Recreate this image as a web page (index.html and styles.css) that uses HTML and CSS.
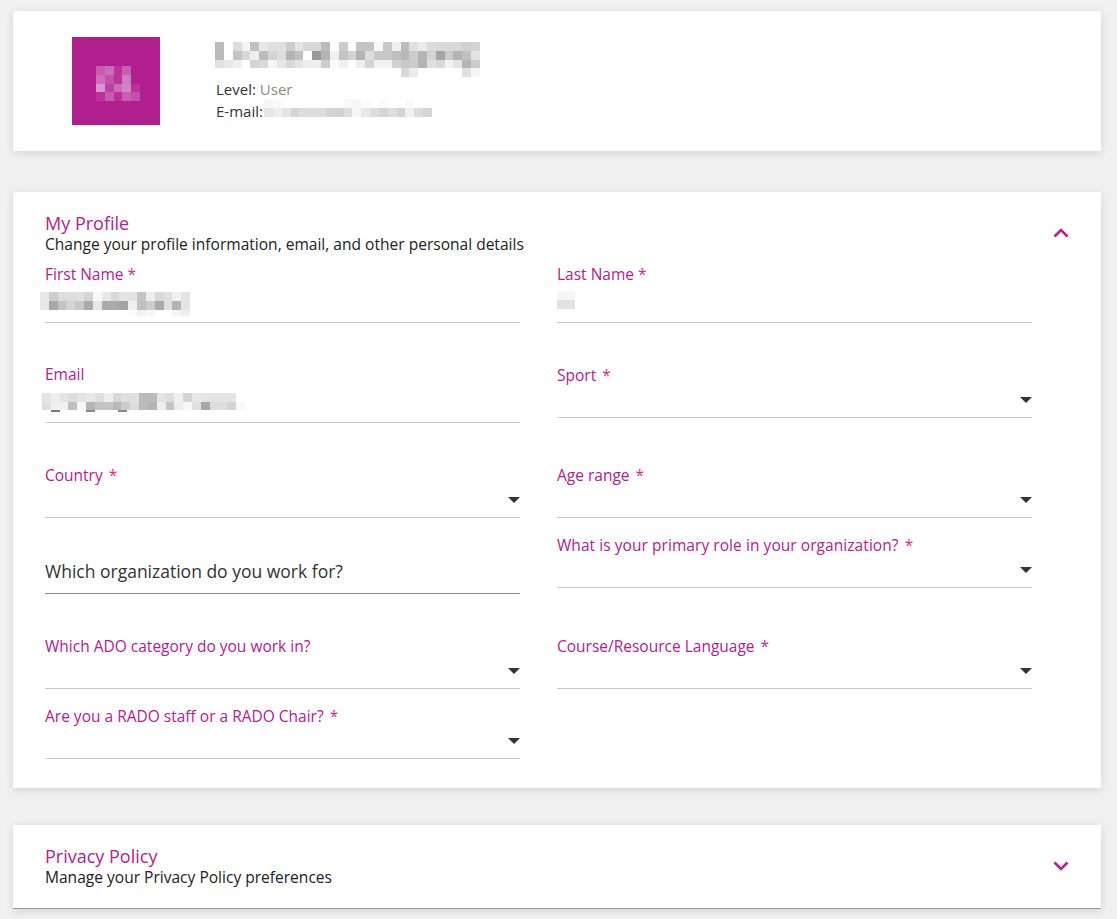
FILE: index.html
```html
<!DOCTYPE html>
<html lang="en">
<head>
<meta charset="utf-8">
<title>My Profile</title>
<link rel="stylesheet" href="styles.css">
</head>
<body>
<section class="card summary">
  <div class="avatar">
    <svg class="mosaic avatar-mosaic" viewBox="0 0 5 4" preserveAspectRatio="none" aria-hidden="true">
      <rect x="0" y="0" fill="#c55cb0"/><rect x="1" y="0" fill="#cc6db7"/><rect x="2" y="0" fill="#b9339b"/><rect x="3" y="0" fill="#c55fb0"/>
      <rect x="0" y="1" fill="#cc6db7"/><rect x="1" y="1" fill="#c451a9"/><rect x="2" y="1" fill="#b9339b"/><rect x="3" y="1" fill="#d07ec0"/>
      <rect x="0" y="2" fill="#da96cd"/><rect x="1" y="2" fill="#c03fa2"/><rect x="2" y="2" fill="#cc6cb7"/><rect x="3" y="2" fill="#d484c3"/><rect x="4" y="2" fill="#bd2f99"/>
      <rect x="0" y="3" fill="#bd2f99"/><rect x="1" y="3" fill="#c75bb0"/><rect x="2" y="3" fill="#bb2e99"/><rect x="3" y="3" fill="#c95eb1"/><rect x="4" y="3" fill="#c350a8"/>
    </svg>
  </div>
  <div class="identity">
    <svg class="mosaic name-mosaic" viewBox="0 0 30 4" preserveAspectRatio="none" aria-hidden="true">
      <rect x="0" y="0" fill="#bbb"/><rect x="2" y="0" fill="#ddd"/><rect x="3" y="0" fill="#f4f4f4"/><rect x="4" y="0" fill="#c0c0c0"/><rect x="5" y="0" fill="#e8e8e8"/><rect x="6" y="0" fill="#e0e0e0"/><rect x="7" y="0" fill="#e0e0e0"/><rect x="8" y="0" fill="#ccc"/><rect x="9" y="0" fill="#e4e4e4"/><rect x="10" y="0" fill="#d8d8d8"/><rect x="11" y="0" fill="#d8d8d8"/><rect x="12" y="0" fill="#bbb"/><rect x="14" y="0" fill="#ccc"/><rect x="16" y="0" fill="#c4c4c4"/><rect x="17" y="0" fill="#c4c4c4"/><rect x="18" y="0" fill="#f8f8f8"/><rect x="19" y="0" fill="#c8c8c8"/><rect x="20" y="0" fill="#f0f0f0"/><rect x="21" y="0" fill="#bbb"/><rect x="22" y="0" fill="#e0e0e0"/><rect x="23" y="0" fill="#ebebeb"/><rect x="24" y="0" fill="#dcdcdc"/><rect x="25" y="0" fill="#d8d8d8"/><rect x="26" y="0" fill="#d8d8d8"/><rect x="27" y="0" fill="#d8d8d8"/><rect x="28" y="0" fill="#d0d0d0"/><rect x="29" y="0" fill="#d4d4d4"/>
      <rect x="0" y="1" fill="#bbb"/><rect x="2" y="1" fill="#c4c4c4"/><rect x="3" y="1" fill="#d8d8d8"/><rect x="4" y="1" fill="#eee"/><rect x="5" y="1" fill="#bbb"/><rect x="6" y="1" fill="#d4d4d4"/><rect x="7" y="1" fill="#ddd"/><rect x="8" y="1" fill="#b4b4b4"/><rect x="9" y="1" fill="#c0c0c0"/><rect x="11" y="1" fill="#999"/><rect x="12" y="1" fill="#b4b4b4"/><rect x="13" y="1" fill="#f0f0f0"/><rect x="14" y="1" fill="#c4c4c4"/><rect x="15" y="1" fill="#d4d4d4"/><rect x="16" y="1" fill="#b4b4b4"/><rect x="17" y="1" fill="#ddd"/><rect x="18" y="1" fill="#c8c8c8"/><rect x="19" y="1" fill="#c8c8c8"/><rect x="20" y="1" fill="#c0c0c0"/><rect x="21" y="1" fill="#b8b8b8"/><rect x="22" y="1" fill="#ccc"/><rect x="23" y="1" fill="#b4b4b4"/><rect x="24" y="1" fill="#d4d4d4"/><rect x="25" y="1" fill="#a4a4a4"/><rect x="26" y="1" fill="#ccc"/><rect x="27" y="1" fill="#b4b4b4"/><rect x="28" y="1" fill="#c0c0c0"/><rect x="29" y="1" fill="#e4e4e4"/>
      <rect x="0" y="2" fill="#e0e0e0"/><rect x="1" y="2" fill="#e8e8e8"/><rect x="2" y="2" fill="#eee"/><rect x="4" y="2" fill="#d4d4d4"/><rect x="5" y="2" fill="#d8d8d8"/><rect x="6" y="2" fill="#f6f6f6"/><rect x="7" y="2" fill="#e6e6e6"/><rect x="8" y="2" fill="#d8d8d8"/><rect x="9" y="2" fill="#e4e4e4"/><rect x="10" y="2" fill="#eee"/><rect x="11" y="2" fill="#eee"/><rect x="12" y="2" fill="#ccc"/><rect x="13" y="2" fill="#fbfbfb"/><rect x="14" y="2" fill="#f0f0f0"/><rect x="16" y="2" fill="#eee"/><rect x="17" y="2" fill="#d4d4d4"/><rect x="18" y="2" fill="#f2f2f2"/><rect x="19" y="2" fill="#f2f2f2"/><rect x="20" y="2" fill="#d0d0d0"/><rect x="21" y="2" fill="#c8c8c8"/><rect x="22" y="2" fill="#ccc"/><rect x="23" y="2" fill="#b4b4b4"/><rect x="24" y="2" fill="#e0e0e0"/><rect x="25" y="2" fill="#d8d8d8"/><rect x="26" y="2" fill="#f2f2f2"/><rect x="27" y="2" fill="#e4e4e4"/><rect x="28" y="2" fill="#b4b4b4"/><rect x="29" y="2" fill="#ccc"/>
      <rect x="21" y="3" fill="#d8d8d8"/><rect x="22" y="3" fill="#ececec"/><rect x="28" y="3" fill="#e0e0e0"/><rect x="29" y="3" fill="#f6f6f6"/>
    </svg>
    <p class="meta">Level: <span class="muted">User</span></p>
    <p class="meta email-line">E-mail:<svg class="mosaic mail-mosaic" viewBox="0 0 19 2" preserveAspectRatio="none" aria-hidden="true">
      <rect x="0" y="0" fill="#f6f6f6"/><rect x="1" y="0" fill="#fafafa"/><rect x="9" y="0" fill="#f8f8f8"/><rect x="10" y="0" fill="#f6f6f6"/><rect x="11" y="0" fill="#fbfbfb"/><rect x="13" y="0" fill="#fbfbfb"/><rect x="16" y="0" fill="#fafafa"/>
      <rect x="0" y="1" fill="#e6e6e6"/><rect x="1" y="1" fill="#eee"/><rect x="2" y="1" fill="#e4e4e4"/><rect x="3" y="1" fill="#d4d4d4"/><rect x="4" y="1" fill="#dcdcdc"/><rect x="5" y="1" fill="#dcdcdc"/><rect x="6" y="1" fill="#dcdcdc"/><rect x="7" y="1" fill="#d4d4d4"/><rect x="8" y="1" fill="#d0d0d0"/><rect x="9" y="1" fill="#ddd"/><rect x="10" y="1" fill="#f6f6f6"/><rect x="11" y="1" fill="#e8e8e8"/><rect x="12" y="1" fill="#dcdcdc"/><rect x="13" y="1" fill="#d4d4d4"/><rect x="14" y="1" fill="#ddd"/><rect x="15" y="1" fill="#d4d4d4"/><rect x="16" y="1" fill="#f0f0f0"/><rect x="17" y="1" fill="#ddd"/><rect x="18" y="1" fill="#d4d4d4"/>
    </svg></p>
  </div>
</section>

<section class="card panel profile">
  <header class="panel-head">
    <div>
      <h2 class="panel-title">My Profile</h2>
      <p class="panel-sub">Change your profile information, email, and other personal details</p>
    </div>
    <svg class="chevron chevron-up" viewBox="0 0 16 10" aria-hidden="true"><path d="M1.5 8.5 8 2l6.5 6.5"/></svg>
  </header>
  <div class="form">
    <div class="col">
      <div class="field text-field">
        <span class="label">First Name <em>*</em></span>
        <svg class="mosaic first-mosaic" viewBox="0 0 17 2.7" preserveAspectRatio="none" aria-hidden="true">
          <rect x="0" y="0" fill="#e8e8e8"/><rect x="1" y="0" fill="#ccc"/><rect x="2" y="0" fill="#ddd"/><rect x="3" y="0" fill="#ddd"/><rect x="4" y="0" fill="#e0e0e0"/><rect x="5" y="0" fill="#d4d4d4"/><rect x="6" y="0" fill="#f8f8f8"/><rect x="7" y="0" fill="#e8e8e8"/><rect x="8" y="0" fill="#d8d8d8"/><rect x="9" y="0" fill="#e4e4e4"/><rect x="10" y="0" fill="#e4e4e4"/><rect x="11" y="0" fill="#c4c4c4"/><rect x="12" y="0" fill="#eee"/><rect x="13" y="0" fill="#d8d8d8"/><rect x="14" y="0" fill="#e0e0e0"/><rect x="15" y="0" fill="#f0f0f0"/><rect x="16" y="0" fill="#e4e4e4"/>
          <rect x="0" y="1" fill="#e8e8e8"/><rect x="1" y="1" fill="#a8a8a8"/><rect x="2" y="1" fill="#c4c4c4"/><rect x="3" y="1" fill="#d4d4d4"/><rect x="4" y="1" fill="#c8c8c8"/><rect x="5" y="1" fill="#aaa"/><rect x="6" y="1" fill="#e8e8e8"/><rect x="7" y="1" fill="#aaa"/><rect x="8" y="1" fill="#aaa"/><rect x="9" y="1" fill="#a4a4a4"/><rect x="10" y="1" fill="#f0f0f0"/><rect x="11" y="1" fill="#c0c0c0"/><rect x="12" y="1" fill="#ccc"/><rect x="13" y="1" fill="#aaa"/><rect x="14" y="1" fill="#e0e0e0"/><rect x="15" y="1" fill="#b4b4b4"/><rect x="16" y="1" fill="#e4e4e4"/>
          <rect x="10" y="2" fill="#fafafa"/><rect x="11" y="2" fill="#f2f2f2"/><rect x="12" y="2" fill="#f6f6f6"/><rect x="15" y="2" fill="#f4f4f4"/><rect x="16" y="2" fill="#eee"/>
        </svg>
      </div>
      <div class="field text-field gap-email">
        <span class="label">Email</span>
        <svg class="mosaic email-mosaic" viewBox="0 0 23 2.3" preserveAspectRatio="none" aria-hidden="true">
          <rect x="0" y="0" fill="#e4e4e4"/><rect x="1" y="0" fill="#eee"/><rect x="2" y="0" fill="#e4e4e4"/><rect x="3" y="0" fill="#ddd"/><rect x="4" y="0" fill="#e4e4e4"/><rect x="5" y="0" fill="#e8e8e8"/><rect x="6" y="0" fill="#e0e0e0"/><rect x="7" y="0" fill="#eee"/><rect x="8" y="0" fill="#d8d8d8"/><rect x="9" y="0" fill="#e0e0e0"/><rect x="10" y="0" fill="#e0e0e0"/><rect x="11" y="0" fill="#bbb"/><rect x="12" y="0" fill="#bbb"/><rect x="13" y="0" fill="#e4e4e4"/><rect x="14" y="0" fill="#ddd"/><rect x="15" y="0" fill="#f0f0f0"/><rect x="16" y="0" fill="#d4d4d4"/><rect x="17" y="0" fill="#e8e8e8"/><rect x="18" y="0" fill="#e4e4e4"/><rect x="19" y="0" fill="#e4e4e4"/><rect x="20" y="0" fill="#e4e4e4"/><rect x="21" y="0" fill="#e4e4e4"/>
          <rect x="0" y="1" fill="#e0e0e0"/><rect x="1" y="1" fill="#f0f0f0"/><rect x="2" y="1" fill="#f0f0f0"/><rect x="3" y="1" fill="#c0c0c0"/><rect x="4" y="1" fill="#f6f6f6"/><rect x="5" y="1" fill="#b4b4b4"/><rect x="6" y="1" fill="#c4c4c4"/><rect x="7" y="1" fill="#c4c4c4"/><rect x="8" y="1" fill="#b8b8b8"/><rect x="9" y="1" fill="#ccc"/><rect x="10" y="1" fill="#ddd"/><rect x="11" y="1" fill="#bbb"/><rect x="12" y="1" fill="#b4b4b4"/><rect x="13" y="1" fill="#eee"/><rect x="14" y="1" fill="#c4c4c4"/><rect x="15" y="1" fill="#eee"/><rect x="16" y="1" fill="#f8f8f8"/><rect x="17" y="1" fill="#e0e0e0"/><rect x="18" y="1" fill="#a8a8a8"/><rect x="19" y="1" fill="#ddd"/><rect x="20" y="1" fill="#ddd"/><rect x="21" y="1" fill="#d4d4d4"/><rect x="22" y="1" fill="#f8f8f8"/>
          <rect class="bit" x="1" y="2" fill="#777"/><rect class="bit" x="5" y="2" fill="#888"/><rect class="bit" x="8.6" y="2" fill="#888"/>
        </svg>
      </div>
      <div class="field select-field gap-country">
        <span class="label">Country <em class="spaced">*</em></span>
        <span class="caret"></span>
      </div>
      <div class="field org-field">
        <span class="org-label">Which organization do you work for?</span>
      </div>
      <div class="field select-field gap-ado">
        <span class="label">Which ADO category do you work in?</span>
        <span class="caret"></span>
      </div>
      <div class="field select-field gap-rado">
        <span class="label">Are you a RADO staff or a RADO Chair? <em class="spaced">*</em></span>
        <span class="caret"></span>
      </div>
    </div>
    <div class="col">
      <div class="field text-field">
        <span class="label">Last Name <em>*</em></span>
        <svg class="mosaic last-mosaic" viewBox="0 0 2 2" preserveAspectRatio="none" aria-hidden="true">
          <rect x="0" y="0" fill="#f6f6f6"/><rect x="1" y="0" fill="#f6f6f6"/>
          <rect x="0" y="1" fill="#e2e2e2"/><rect x="1" y="1" fill="#e2e2e2"/>
        </svg>
      </div>
      <div class="field select-field gap-sport">
        <span class="label">Sport <em class="spaced">*</em></span>
        <span class="caret"></span>
      </div>
      <div class="field select-field gap-age">
        <span class="label">Age range <em class="spaced">*</em></span>
        <span class="caret"></span>
      </div>
      <div class="field select-field gap-role">
        <span class="label label-wide">What is your primary role in your organization? <em class="spaced">*</em></span>
        <span class="caret"></span>
      </div>
      <div class="field select-field gap-course">
        <span class="label">Course/Resource Language <em class="spaced">*</em></span>
        <span class="caret"></span>
      </div>
    </div>
  </div>
</section>

<section class="card panel privacy">
  <header class="panel-head">
    <div>
      <h2 class="panel-title">Privacy Policy</h2>
      <p class="panel-sub">Manage your Privacy Policy preferences</p>
    </div>
    <svg class="chevron chevron-down" viewBox="0 0 16 10" aria-hidden="true"><path d="M1.5 1.5 8 8l6.5-6.5"/></svg>
  </header>
</section>
</body>
</html>
```
FILE: styles.css
```css
* { box-sizing: border-box; }

html, body { height: 919px; overflow: hidden; }

body {
  margin: 0;
  padding: 11px 16px 0 13px;
  background: #f0f0f0;
  font-family: "Open Sans", "Noto Sans", sans-serif;
  font-size: 15px;
  color: #222;
}

.card {
  background: #fff;
  border-radius: 2px;
  box-shadow: 0 2px 8px rgba(0, 0, 0, 0.12);
}

.summary {
  display: flex;
  height: 140px;
  padding: 26px 0 0 59px;
  gap: 55px;
}

.avatar {
  width: 88px;
  height: 88px;
  background: #b01f8d;
  flex: none;
  padding: 29px 0 0 24px;
}

.mosaic {
  display: block;
  shape-rendering: crispEdges;
}

.mosaic rect { width: 1px; height: 1px; }
.mosaic rect.bit { height: 0.2px; }

.avatar-mosaic { width: 44px; height: 35px; }

.identity { padding-top: 5px; }

.name-mosaic { width: 265px; height: 35px; margin-bottom: 1px; }

.meta {
  margin: 0;
  height: 22px;
  line-height: 22px;
  padding-left: 1px;
  color: #333;
}

.meta.email-line { position: relative; }

.muted { color: #8a8a8a; }

.mail-mosaic {
  position: absolute;
  left: 49px;
  top: -1px;
  width: 168px;
  height: 18px;
}

.panel { margin-top: 41px; padding: 0 32px; }

.profile { height: 596px; }

.privacy {
  margin-top: 37px;
  height: 84px;
  border-bottom: 1px solid #999;
  border-radius: 0;
}

.panel-head {
  position: relative;
  padding-top: 20px;
  margin-bottom: 11px;
}

.panel-title {
  margin: 0;
  font-size: 18px;
  font-weight: 400;
  line-height: 23px;
  color: #b5208f;
}

.panel-sub {
  margin: 0;
  font-size: 15.55px;
  line-height: 18px;
  font-weight: 500;
  color: #222;
}

.chevron {
  position: absolute;
  right: 0;
  top: 36px;
  width: 16px;
  height: 10px;
  fill: none;
  stroke: #b5208f;
  stroke-width: 2.6;
}

.form {
  display: flex;
  gap: 37px;
  width: 987px;
}

.col { width: 475px; flex: none; }

.field {
  position: relative;
  border-bottom: 1px solid #c8c8c8;
}

.label {
  display: block;
  font-size: 15.5px;
  line-height: 20px;
  color: #b5208f;
}

.label-wide { letter-spacing: 0.06px; }

.label em {
  font-style: normal;
  color: #d62f83;
}

.label em.spaced { margin-left: 2px; }

.text-field { height: 59px; }

.text-field .mosaic { position: relative; top: 1px; }

.select-field { height: 53px; }

.gap-email { margin-top: 41px; }
.gap-country { margin-top: 42px; }
.gap-ado { margin-top: 42px; }
.gap-rado { margin-top: 17px; }
.gap-sport { margin-top: 42px; }
.gap-age { margin-top: 47px; }
.gap-role { margin-top: 17px; }
.gap-course { margin-top: 48px; }

.org-field {
  margin-top: 17px;
  height: 59px;
  padding-top: 24px;
  border-bottom-color: #8a8a8a;
}

.org-label {
  font-size: 17.5px;
  line-height: 24px;
  color: #333;
  display: block;
}

.caret {
  position: absolute;
  right: 0;
  bottom: 14px;
  width: 0;
  height: 0;
  border-left: 6.5px solid transparent;
  border-right: 6.5px solid transparent;
  border-top: 6.5px solid #333;
}

.first-mosaic { width: 150px; height: 24px; margin: 7px 0 0 -5px; }
.email-mosaic { width: 203px; height: 20px; margin: 8px 0 0 -3px; }
.last-mosaic { width: 18px; height: 18px; margin-top: 6px; }
```
